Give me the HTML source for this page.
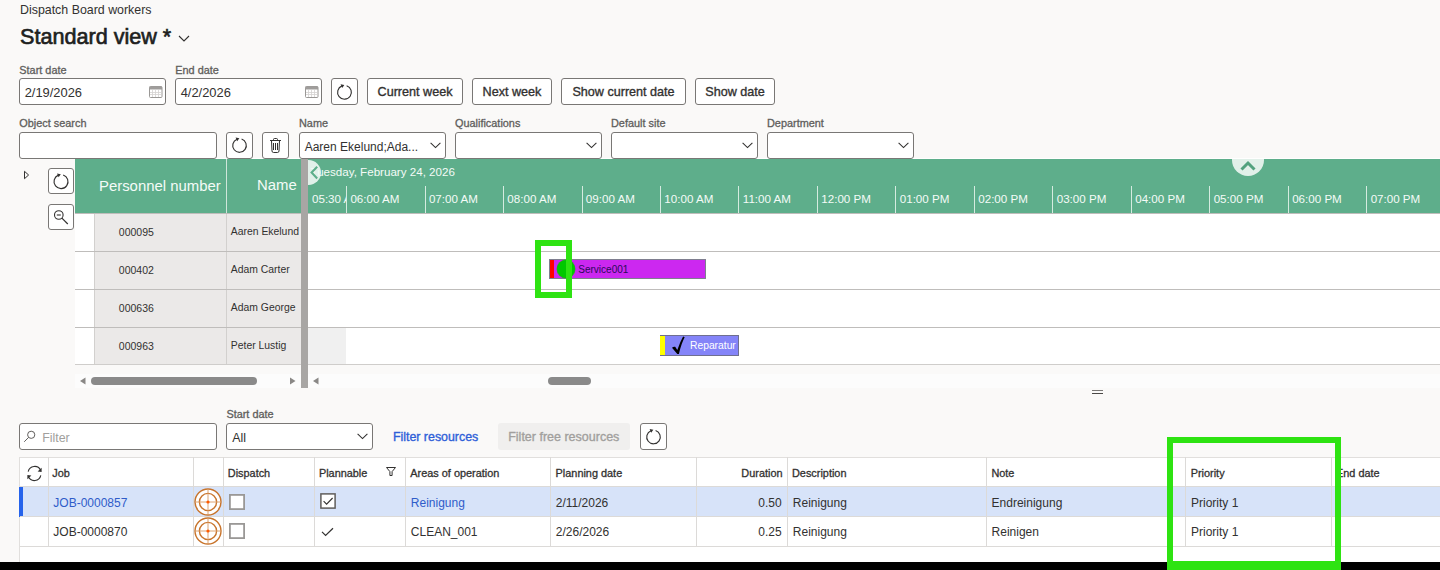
<!DOCTYPE html>
<html><head><meta charset="utf-8"><title>Dispatch Board workers</title>
<style>
html,body{margin:0;padding:0;}
body{width:1440px;height:570px;position:relative;overflow:hidden;background:#faf9f8;font-family:"Liberation Sans",sans-serif;}
.a{position:absolute;}
.t{position:absolute;white-space:nowrap;line-height:1;}
.box{background:#fff;border:1px solid #797775;border-radius:3px;box-sizing:border-box;}
svg{overflow:visible}
</style></head><body>
<div class="t" style="left:20.00px;top:3.50px;font-size:12.4px;font-weight:400;color:#323130;">Dispatch Board workers</div>
<div class="t" style="left:20.00px;top:25.72px;font-size:21.6px;font-weight:400;color:#201f1e;-webkit-text-stroke:0.65px #201f1e;">Standard view *</div>
<svg class="a" style="left:178px;top:34px;" width="12" height="9" viewBox="0 0 12 9"><path d="M1 2 L6 7 L11 2" fill="none" stroke="#323130" stroke-width="1.1"/></svg>
<div class="t" style="left:19.30px;top:64.77px;font-size:10.9px;font-weight:400;color:#605e5c;-webkit-text-stroke:0.3px #605e5c;">Start date</div>
<div class="t" style="left:175.30px;top:64.77px;font-size:10.9px;font-weight:400;color:#605e5c;-webkit-text-stroke:0.3px #605e5c;">End date</div>
<div class="a box" style="left:19px;top:78px;width:147px;height:27px;"></div>
<div class="t" style="left:24.70px;top:87.08px;font-size:12.9px;font-weight:400;color:#323130;">2/19/2026</div>
<svg class="a" style="left:149px;top:86px;" width="14" height="12" viewBox="0 0 14 12"><rect x="0.5" y="0.5" width="12.5" height="11" rx="1" fill="#fff" stroke="#9a9896" stroke-width="1"/><rect x="0.5" y="0.5" width="12.5" height="3" fill="#9f9d9b"/><path d="M3.5 4 V11 M6.5 4 V11 M9.5 4 V11 M1 6.5 H12.5 M1 8.5 H12.5" stroke="#d4d2d0" stroke-width="0.8"/></svg>
<div class="a box" style="left:175px;top:78px;width:147px;height:27px;"></div>
<div class="t" style="left:180.70px;top:87.08px;font-size:12.9px;font-weight:400;color:#323130;">4/2/2026</div>
<svg class="a" style="left:305px;top:86px;" width="14" height="12" viewBox="0 0 14 12"><rect x="0.5" y="0.5" width="12.5" height="11" rx="1" fill="#fff" stroke="#9a9896" stroke-width="1"/><rect x="0.5" y="0.5" width="12.5" height="3" fill="#9f9d9b"/><path d="M3.5 4 V11 M6.5 4 V11 M9.5 4 V11 M1 6.5 H12.5 M1 8.5 H12.5" stroke="#d4d2d0" stroke-width="0.8"/></svg>
<div class="a box" style="left:331px;top:78px;width:27px;height:27px;"></div>
<svg class="a" style="left:331px;top:78px;" width="27" height="27" viewBox="0 0 27 27"><path d="M15.63 7.74 A6.9 6.9 0 1 1 10.92 7.90" fill="none" stroke="#323130" stroke-width="1.15"/><path d="M13.33 6.93 L9.57 6.18 L11.15 10.07 Z" fill="#323130"/></svg>
<div class="a box" style="left:367px;top:78px;width:96px;height:27px;"></div>
<div class="t" style="left:367px;top:85.63px;width:96px;text-align:center;font-size:12.6px;font-weight:400;-webkit-text-stroke:0.35px #323130;color:#323130">Current week</div>
<div class="a box" style="left:472px;top:78px;width:80px;height:27px;"></div>
<div class="t" style="left:472px;top:85.63px;width:80px;text-align:center;font-size:12.6px;font-weight:400;-webkit-text-stroke:0.35px #323130;color:#323130">Next week</div>
<div class="a box" style="left:561px;top:78px;width:125px;height:27px;"></div>
<div class="t" style="left:561px;top:85.63px;width:125px;text-align:center;font-size:12.6px;font-weight:400;-webkit-text-stroke:0.35px #323130;color:#323130">Show current date</div>
<div class="a box" style="left:695px;top:78px;width:80px;height:27px;"></div>
<div class="t" style="left:695px;top:85.63px;width:80px;text-align:center;font-size:12.6px;font-weight:400;-webkit-text-stroke:0.35px #323130;color:#323130">Show date</div>
<div class="t" style="left:19.30px;top:118.07px;font-size:10.9px;font-weight:400;color:#605e5c;-webkit-text-stroke:0.3px #605e5c;">Object search</div>
<div class="t" style="left:299.00px;top:118.07px;font-size:10.9px;font-weight:400;color:#605e5c;-webkit-text-stroke:0.3px #605e5c;">Name</div>
<div class="t" style="left:455.00px;top:118.07px;font-size:10.9px;font-weight:400;color:#605e5c;-webkit-text-stroke:0.3px #605e5c;">Qualifications</div>
<div class="t" style="left:611.00px;top:118.07px;font-size:10.9px;font-weight:400;color:#605e5c;-webkit-text-stroke:0.3px #605e5c;">Default site</div>
<div class="t" style="left:767.00px;top:118.07px;font-size:10.9px;font-weight:400;color:#605e5c;-webkit-text-stroke:0.3px #605e5c;">Department</div>
<div class="a" style="left:75px;top:158px;width:1365px;height:1px;background:#ffffff"></div>
<div class="a box" style="left:19px;top:132px;width:198px;height:27px;"></div>
<div class="a box" style="left:226px;top:132px;width:27px;height:27px;"></div>
<svg class="a" style="left:226px;top:132px;" width="27" height="26" viewBox="0 0 27 26"><path d="M15.60 7.03 A6.8 6.8 0 1 1 10.95 7.20" fill="none" stroke="#323130" stroke-width="1.15"/><path d="M13.36 6.22 L9.61 5.47 L11.18 9.37 Z" fill="#323130"/></svg>
<div class="a box" style="left:262px;top:132px;width:27px;height:27px;"></div>
<svg class="a" style="left:262px;top:132px;" width="27" height="26" viewBox="0 0 27 26"><path d="M8 8.5 H19 M11.5 8.5 V7.5 Q11.5 6.5 12.5 6.5 H14.5 Q15.5 6.5 15.5 7.5 V8.5 M9.5 8.5 L10 19 Q10.1 20.5 11.5 20.5 H15.5 Q16.9 20.5 17 19 L17.5 8.5 M11.5 11 V18 M13.5 11 V18 M15.5 11 V18" fill="none" stroke="#323130" stroke-width="1"/></svg>
<div class="a box" style="left:299px;top:132px;width:147px;height:27px;"></div>
<svg class="a" style="left:430px;top:142px;" width="11" height="7" viewBox="0 0 11 7"><path d="M0.6 0.8 L5.5 5.6 L10.4 0.8" fill="none" stroke="#323130" stroke-width="1.1"/></svg>
<div class="t" style="left:304.70px;top:140.84px;font-size:12.0px;font-weight:400;color:#323130;">Aaren Ekelund;Ada...</div>
<div class="a box" style="left:455px;top:132px;width:147px;height:27px;"></div>
<svg class="a" style="left:586px;top:142px;" width="11" height="7" viewBox="0 0 11 7"><path d="M0.6 0.8 L5.5 5.6 L10.4 0.8" fill="none" stroke="#323130" stroke-width="1.1"/></svg>
<div class="a box" style="left:611px;top:132px;width:147px;height:27px;"></div>
<svg class="a" style="left:742px;top:142px;" width="11" height="7" viewBox="0 0 11 7"><path d="M0.6 0.8 L5.5 5.6 L10.4 0.8" fill="none" stroke="#323130" stroke-width="1.1"/></svg>
<div class="a box" style="left:767px;top:132px;width:147px;height:27px;"></div>
<svg class="a" style="left:898px;top:142px;" width="11" height="7" viewBox="0 0 11 7"><path d="M0.6 0.8 L5.5 5.6 L10.4 0.8" fill="none" stroke="#323130" stroke-width="1.1"/></svg>
<div class="a" style="left:75px;top:159px;width:1365px;height:54px;background:#5eae8b"></div>
<svg class="a" style="left:23px;top:170px;" width="7" height="10" viewBox="0 0 7 10"><path d="M1.5 1.3 L5.6 5 L1.5 8.7 Z" fill="none" stroke="#323130" stroke-width="1"/></svg>
<div class="a box" style="left:48px;top:168px;width:26px;height:26px;"></div>
<svg class="a" style="left:48px;top:168px;" width="26" height="26" viewBox="0 0 26 26"><path d="M15.16 6.94 A7 7 0 1 1 10.38 7.11" fill="none" stroke="#323130" stroke-width="1.15"/><path d="M12.79 6.14 L9.03 5.39 L10.61 9.28 Z" fill="#323130"/></svg>
<div class="a box" style="left:48px;top:204px;width:26px;height:26px;"></div>
<svg class="a" style="left:48px;top:204px;" width="26" height="26" viewBox="0 0 26 26"><circle cx="10.8" cy="11" r="4.3" fill="none" stroke="#323130" stroke-width="1.1"/><path d="M8.8 11 H12.8" stroke="#323130" stroke-width="1.1"/><path d="M13.9 14.1 L19.8 20" stroke="#323130" stroke-width="1.2"/></svg>
<div class="a" style="left:225.5px;top:159px;width:1px;height:54px;background:#cfe6da"></div>
<div class="t" style="left:99.00px;top:178.69px;font-size:14.9px;font-weight:400;color:#f4fbf7;">Personnel number</div>
<div class="t" style="right:1143.30px;top:178.19px;font-size:14.9px;font-weight:400;color:#f4fbf7;text-align:right;">Name</div>
<div class="a" style="left:75px;top:213px;width:1365px;height:152px;background:#ffffff"></div>
<div class="a" style="left:94.5px;top:213px;width:206px;height:152px;background:#ebe9e8"></div>
<div class="a" style="left:94px;top:213px;width:1px;height:152px;background:#d2d0ce"></div>
<div class="a" style="left:225.5px;top:213px;width:1px;height:152px;background:#d2d0ce"></div>
<div class="a" style="left:307.5px;top:327px;width:38.7px;height:38px;background:#f0f0f0"></div>
<div class="a" style="left:75px;top:212.5px;width:1365px;height:1.5px;background:#bfbdbb"></div>
<div class="a" style="left:75px;top:250.5px;width:1365px;height:1.5px;background:#bfbdbb"></div>
<div class="a" style="left:75px;top:288.5px;width:1365px;height:1.5px;background:#bfbdbb"></div>
<div class="a" style="left:75px;top:326.5px;width:1365px;height:1.5px;background:#bfbdbb"></div>
<div class="a" style="left:75px;top:364px;width:1365px;height:1.2px;background:#cfcdcb"></div>
<div class="t" style="left:118.80px;top:226.61px;font-size:10.5px;font-weight:400;color:#323130;">000095</div>
<div class="t" style="left:230.80px;top:226.70px;font-size:10.4px;font-weight:400;color:#323130;">Aaren Ekelund</div>
<div class="t" style="left:118.80px;top:264.61px;font-size:10.5px;font-weight:400;color:#323130;">000402</div>
<div class="t" style="left:230.80px;top:264.70px;font-size:10.4px;font-weight:400;color:#323130;">Adam Carter</div>
<div class="t" style="left:118.80px;top:302.61px;font-size:10.5px;font-weight:400;color:#323130;">000636</div>
<div class="t" style="left:230.80px;top:302.70px;font-size:10.4px;font-weight:400;color:#323130;">Adam George</div>
<div class="t" style="left:118.80px;top:340.61px;font-size:10.5px;font-weight:400;color:#323130;">000963</div>
<div class="t" style="left:230.80px;top:340.70px;font-size:10.4px;font-weight:400;color:#323130;">Peter Lustig</div>
<div class="a" style="left:346px;top:186px;width:1px;height:27px;background:#d5ebe0"></div>
<div class="t" style="left:350.40px;top:193.18px;font-size:11.6px;font-weight:400;color:#f4fbf7;">06:00 AM</div>
<div class="a" style="left:425px;top:186px;width:1px;height:27px;background:#d5ebe0"></div>
<div class="t" style="left:428.88px;top:193.18px;font-size:11.6px;font-weight:400;color:#f4fbf7;">07:00 AM</div>
<div class="a" style="left:503px;top:186px;width:1px;height:27px;background:#d5ebe0"></div>
<div class="t" style="left:507.36px;top:193.18px;font-size:11.6px;font-weight:400;color:#f4fbf7;">08:00 AM</div>
<div class="a" style="left:582px;top:186px;width:1px;height:27px;background:#d5ebe0"></div>
<div class="t" style="left:585.84px;top:193.18px;font-size:11.6px;font-weight:400;color:#f4fbf7;">09:00 AM</div>
<div class="a" style="left:660px;top:186px;width:1px;height:27px;background:#d5ebe0"></div>
<div class="t" style="left:664.32px;top:193.18px;font-size:11.6px;font-weight:400;color:#f4fbf7;">10:00 AM</div>
<div class="a" style="left:738px;top:186px;width:1px;height:27px;background:#d5ebe0"></div>
<div class="t" style="left:742.80px;top:193.18px;font-size:11.6px;font-weight:400;color:#f4fbf7;">11:00 AM</div>
<div class="a" style="left:817px;top:186px;width:1px;height:27px;background:#d5ebe0"></div>
<div class="t" style="left:821.28px;top:193.18px;font-size:11.6px;font-weight:400;color:#f4fbf7;">12:00 PM</div>
<div class="a" style="left:895px;top:186px;width:1px;height:27px;background:#d5ebe0"></div>
<div class="t" style="left:899.76px;top:193.18px;font-size:11.6px;font-weight:400;color:#f4fbf7;">01:00 PM</div>
<div class="a" style="left:974px;top:186px;width:1px;height:27px;background:#d5ebe0"></div>
<div class="t" style="left:978.24px;top:193.18px;font-size:11.6px;font-weight:400;color:#f4fbf7;">02:00 PM</div>
<div class="a" style="left:1052px;top:186px;width:1px;height:27px;background:#d5ebe0"></div>
<div class="t" style="left:1056.72px;top:193.18px;font-size:11.6px;font-weight:400;color:#f4fbf7;">03:00 PM</div>
<div class="a" style="left:1131px;top:186px;width:1px;height:27px;background:#d5ebe0"></div>
<div class="t" style="left:1135.20px;top:193.18px;font-size:11.6px;font-weight:400;color:#f4fbf7;">04:00 PM</div>
<div class="a" style="left:1209px;top:186px;width:1px;height:27px;background:#d5ebe0"></div>
<div class="t" style="left:1213.68px;top:193.18px;font-size:11.6px;font-weight:400;color:#f4fbf7;">05:00 PM</div>
<div class="a" style="left:1288px;top:186px;width:1px;height:27px;background:#d5ebe0"></div>
<div class="t" style="left:1292.16px;top:193.18px;font-size:11.6px;font-weight:400;color:#f4fbf7;">06:00 PM</div>
<div class="a" style="left:1366px;top:186px;width:1px;height:27px;background:#d5ebe0"></div>
<div class="t" style="left:1370.64px;top:193.18px;font-size:11.6px;font-weight:400;color:#f4fbf7;">07:00 PM</div>
<div class="a" style="left:307.5px;top:186px;width:38.5px;height:27px;overflow:hidden">
<div class="t" style="left:4.50px;top:7.18px;font-size:11.6px;font-weight:400;color:#f4fbf7;">05:30 AM</div>
</div>
<div class="a" style="left:307.5px;top:159px;width:20px;height:54px;overflow:hidden">
<div class="a" style="left:-12px;top:0.8px;width:25px;height:25px;border-radius:50%;background:#e1f0e9"></div>
</div>
<div class="t" style="left:310.50px;top:166.48px;font-size:11.6px;font-weight:400;color:#f4fbf7;">Tuesday, February 24, 2026</div>
<svg class="a" style="left:309px;top:165px;" width="10" height="15" viewBox="0 0 10 15"><path d="M8.2 1.8 L2.6 7.6 L8.2 13.4" fill="none" stroke="#5eae8b" stroke-width="2.1"/></svg>
<div class="a" style="left:1230px;top:159px;width:36px;height:20px;overflow:hidden">
<div class="a" style="left:2px;top:-15px;width:32px;height:32px;border-radius:50%;background:#e1f0e9"></div>
</div>
<svg class="a" style="left:1240px;top:160px;" width="16" height="11" viewBox="0 0 16 11"><path d="M1.5 9.5 L8 3 L14.5 9.5" fill="none" stroke="#52a27e" stroke-width="3"/></svg>
<div class="a" style="left:300.5px;top:159px;width:7px;height:229px;background:#a8a6a4"></div>
<div class="a" style="left:549px;top:259.2px;width:157px;height:20.3px;background:#cc28f0;box-shadow:inset 0 0 0 1px #7f7f8f"></div>
<div class="a" style="left:549.5px;top:259.7px;width:4.3px;height:18.8px;background:#ff0000"></div>
<div class="a" style="left:557px;top:260px;width:18px;height:18px;border-radius:50%;background:#00c800;box-shadow:0 0 0 0.5px #4a8a4a"></div>
<div class="t" style="left:578.30px;top:264.64px;font-size:10.0px;font-weight:400;color:#2a0a5a;">Service001</div>
<div class="a" style="left:659.8px;top:335px;width:78.8px;height:20.5px;background:#8484f8;box-shadow:inset 0 0 0 1px #6f6f8f"></div>
<div class="a" style="left:660.3px;top:335.5px;width:5px;height:19.3px;background:#ffff00"></div>
<svg class="a" style="left:670px;top:335px;" width="16" height="20" viewBox="0 0 16 20"><path d="M2 12.8 Q3.6 11.2 5.2 11.8 L7.3 14.9 Q10.1 6.8 13.1 1.5 L14.7 2.3 Q11.5 8 8.9 18.9 L7.3 18.9 Z" fill="#000"/></svg>
<div class="t" style="left:690.00px;top:341.28px;font-size:10.3px;font-weight:400;color:#ffffff;">Reparatur</div>
<div class="a" style="left:75px;top:374px;width:1365px;height:14px;background:#fcfcfc"></div>
<svg class="a" style="left:79px;top:377px;" width="8" height="8" viewBox="0 0 8 8"><path d="M6.5 0.5 L1 4 L6.5 7.5 Z" fill="#8a8886"/></svg>
<div class="a" style="left:90.8px;top:377px;width:166px;height:8.2px;background:#8a8a8a;border-radius:4.1px"></div>
<svg class="a" style="left:289px;top:377px;" width="8" height="8" viewBox="0 0 8 8"><path d="M1 0.5 L6.5 4 L1 7.5 Z" fill="#8a8886"/></svg>
<svg class="a" style="left:312px;top:377px;" width="8" height="8" viewBox="0 0 8 8"><path d="M6.5 0.5 L1 4 L6.5 7.5 Z" fill="#8a8886"/></svg>
<div class="a" style="left:547.6px;top:377px;width:43.4px;height:8px;background:#8a8a8a;border-radius:4px"></div>
<div class="a" style="left:300.5px;top:374px;width:7px;height:14px;background:#a8a6a4"></div>
<div class="a" style="left:1092px;top:390.3px;width:11px;height:1.2px;background:#7a7876"></div>
<div class="a" style="left:1092px;top:393px;width:11px;height:1.2px;background:#4a4846"></div>
<div class="t" style="left:226.40px;top:409.27px;font-size:10.9px;font-weight:400;color:#605e5c;-webkit-text-stroke:0.3px #605e5c;">Start date</div>
<div class="a box" style="left:19px;top:423px;width:198px;height:27px;"></div>
<svg class="a" style="left:22px;top:428px;" width="16" height="16" viewBox="0 0 16 16"><circle cx="9.2" cy="6.8" r="3.6" fill="none" stroke="#605e5c" stroke-width="1"/><path d="M6.6 9.4 L2.2 13.8" stroke="#605e5c" stroke-width="1"/></svg>
<div class="t" style="left:42.20px;top:431.80px;font-size:12.4px;font-weight:400;color:#a19f9d;">Filter</div>
<div class="a box" style="left:226px;top:423px;width:147px;height:27px;"></div>
<svg class="a" style="left:357px;top:433px;" width="11" height="7" viewBox="0 0 11 7"><path d="M0.6 0.8 L5.5 5.6 L10.4 0.8" fill="none" stroke="#323130" stroke-width="1.1"/></svg>
<div class="t" style="left:232.20px;top:431.80px;font-size:12.4px;font-weight:400;color:#323130;">All</div>
<div class="t" style="left:392.90px;top:430.60px;font-size:12.4px;font-weight:400;color:#2f5fd8;-webkit-text-stroke:0.35px #2f5fd8;">Filter resources</div>
<div class="a" style="left:498px;top:423px;width:132px;height:27px;background:#f0efee;border-radius:3px"></div>
<div class="t" style="left:508.20px;top:430.52px;font-size:12.5px;font-weight:400;color:#a19f9d;-webkit-text-stroke:0.35px #a19f9d;">Filter free resources</div>
<div class="a box" style="left:640px;top:423px;width:27px;height:27px;"></div>
<svg class="a" style="left:640px;top:423px;" width="27" height="27" viewBox="0 0 27 27"><path d="M15.60 7.53 A6.8 6.8 0 1 1 10.95 7.70" fill="none" stroke="#323130" stroke-width="1.15"/><path d="M13.36 6.72 L9.61 5.97 L11.18 9.87 Z" fill="#323130"/></svg>
<div class="a" style="left:19px;top:457px;width:1421px;height:105px;background:#ffffff;border-top:1px solid #e1dfdd;border-left:1px solid #e1dfdd;box-sizing:border-box"></div>
<div class="a" style="left:20px;top:486.5px;width:1420px;height:30px;background:#d7e3f9"></div>
<div class="a" style="left:19px;top:487px;width:4px;height:29.7px;background:#2563eb"></div>
<div class="a" style="left:20px;top:486px;width:1420px;height:1px;background:#dcdad8"></div>
<div class="a" style="left:20px;top:516px;width:1420px;height:1px;background:#dcdad8"></div>
<div class="a" style="left:20px;top:545.5px;width:1420px;height:1px;background:#dcdad8"></div>
<div class="a" style="left:48px;top:457px;width:1px;height:89px;background:#dcdad8"></div>
<div class="a" style="left:193px;top:457px;width:1px;height:89px;background:#dcdad8"></div>
<div class="a" style="left:223px;top:457px;width:1px;height:89px;background:#dcdad8"></div>
<div class="a" style="left:314px;top:457px;width:1px;height:89px;background:#dcdad8"></div>
<div class="a" style="left:405px;top:457px;width:1px;height:89px;background:#dcdad8"></div>
<div class="a" style="left:550px;top:457px;width:1px;height:89px;background:#dcdad8"></div>
<div class="a" style="left:696px;top:457px;width:1px;height:89px;background:#dcdad8"></div>
<div class="a" style="left:787px;top:457px;width:1px;height:89px;background:#dcdad8"></div>
<div class="a" style="left:986px;top:457px;width:1px;height:89px;background:#dcdad8"></div>
<div class="a" style="left:1185px;top:457px;width:1px;height:89px;background:#dcdad8"></div>
<div class="a" style="left:1331px;top:457px;width:1px;height:89px;background:#dcdad8"></div>
<svg class="a" style="left:26px;top:465px;" width="17" height="17" viewBox="0 0 17 17"><path d="M2.2 6.6 A6.6 6.6 0 0 1 14.6 5.2" fill="none" stroke="#323130" stroke-width="1.1"/><path d="M15.6 2.8 L15.6 6.9 L11.6 6.6 Z" fill="#323130"/><path d="M14.8 10.4 A6.6 6.6 0 0 1 2.4 11.8" fill="none" stroke="#323130" stroke-width="1.1"/><path d="M1.4 14.2 L1.4 10.1 L5.4 10.4 Z" fill="#323130"/></svg>
<div class="t" style="left:52.20px;top:467.97px;font-size:10.9px;font-weight:400;color:#323130;-webkit-text-stroke:0.3px #323130;">Job</div>
<div class="t" style="left:227.80px;top:467.97px;font-size:10.9px;font-weight:400;color:#323130;-webkit-text-stroke:0.3px #323130;">Dispatch</div>
<div class="t" style="left:318.90px;top:467.97px;font-size:10.9px;font-weight:400;color:#323130;-webkit-text-stroke:0.3px #323130;">Plannable</div>
<svg class="a" style="left:386px;top:467px;" width="10" height="10" viewBox="0 0 10 10"><path d="M0.5 0.5 H9.5 L6.1 4.6 V8.5 H3.9 V4.6 Z" fill="none" stroke="#323130" stroke-width="1" stroke-linejoin="round"/></svg>
<div class="t" style="left:410.30px;top:467.97px;font-size:10.9px;font-weight:400;color:#323130;-webkit-text-stroke:0.3px #323130;">Areas of operation</div>
<div class="t" style="left:555.60px;top:467.97px;font-size:10.9px;font-weight:400;color:#323130;-webkit-text-stroke:0.3px #323130;">Planning date</div>
<div class="t" style="right:657.50px;top:467.97px;font-size:10.9px;font-weight:400;color:#323130;text-align:right;-webkit-text-stroke:0.3px #323130;">Duration</div>
<div class="t" style="left:792.00px;top:467.97px;font-size:10.9px;font-weight:400;color:#323130;-webkit-text-stroke:0.3px #323130;">Description</div>
<div class="t" style="left:991.40px;top:467.97px;font-size:10.9px;font-weight:400;color:#323130;-webkit-text-stroke:0.3px #323130;">Note</div>
<div class="t" style="left:1190.70px;top:467.97px;font-size:10.9px;font-weight:400;color:#323130;-webkit-text-stroke:0.3px #323130;">Priority</div>
<div class="t" style="left:1336.00px;top:467.97px;font-size:10.9px;font-weight:400;color:#323130;-webkit-text-stroke:0.3px #323130;">End date</div>
<div class="t" style="left:53.30px;top:496.54px;font-size:12.0px;font-weight:400;color:#2f5cc9;">JOB-0000857</div>
<svg class="a" style="left:194px;top:487.5px;" width="28" height="28" viewBox="0 0 28 28"><circle cx="14" cy="14" r="13" fill="#fff" stroke="#c8742c" stroke-width="1.4"/><circle cx="14" cy="14" r="8.6" fill="none" stroke="#c8742c" stroke-width="1.4"/><path d="M1 14 H27 M14 1 V27" stroke="#d99a62" stroke-width="0.9"/><circle cx="14" cy="14" r="1.6" fill="#ff5a00"/></svg>
<svg class="a" style="left:228.5px;top:493.5px;" width="16" height="16" viewBox="0 0 16 16"><rect x="0.9" y="0.9" width="14.2" height="14.2" fill="#fff" stroke="#9a9896" stroke-width="1.8"/></svg>
<svg class="a" style="left:319.5px;top:493.3px;" width="16" height="16" viewBox="0 0 16 16"><rect x="0.9" y="0.9" width="14.2" height="14.2" fill="#fff" stroke="#605e5c" stroke-width="1.5"/><path d="M3.6 8.2 L6.6 11.2 L12.6 5" fill="none" stroke="#323130" stroke-width="1.1"/></svg>
<div class="t" style="left:410.80px;top:496.54px;font-size:12.0px;font-weight:400;color:#2f5cc9;">Reinigung</div>
<div class="t" style="left:555.80px;top:496.54px;font-size:12.0px;font-weight:400;color:#323130;">2/11/2026</div>
<div class="t" style="right:658.30px;top:496.54px;font-size:12.0px;font-weight:400;color:#323130;text-align:right;">0.50</div>
<div class="t" style="left:792.80px;top:496.54px;font-size:12.0px;font-weight:400;color:#323130;">Reinigung</div>
<div class="t" style="left:991.60px;top:496.54px;font-size:12.0px;font-weight:400;color:#323130;">Endreinigung</div>
<div class="t" style="left:1191.00px;top:496.54px;font-size:12.0px;font-weight:400;color:#323130;">Priority 1</div>
<div class="t" style="left:53.30px;top:526.04px;font-size:12.0px;font-weight:400;color:#323130;">JOB-0000870</div>
<svg class="a" style="left:194px;top:517.1px;" width="28" height="28" viewBox="0 0 28 28"><circle cx="14" cy="14" r="13" fill="#fff" stroke="#c8742c" stroke-width="1.4"/><circle cx="14" cy="14" r="8.6" fill="none" stroke="#c8742c" stroke-width="1.4"/><path d="M1 14 H27 M14 1 V27" stroke="#d99a62" stroke-width="0.9"/><circle cx="14" cy="14" r="1.6" fill="#ff5a00"/></svg>
<svg class="a" style="left:228.5px;top:523.1px;" width="16" height="16" viewBox="0 0 16 16"><rect x="0.9" y="0.9" width="14.2" height="14.2" fill="#fff" stroke="#9a9896" stroke-width="1.8"/></svg>
<svg class="a" style="left:321px;top:527px;" width="13" height="10" viewBox="0 0 13 10"><path d="M1 4.8 L4.6 8.4 L12 1.2" fill="none" stroke="#323130" stroke-width="1.2"/></svg>
<div class="t" style="left:410.80px;top:526.04px;font-size:12.0px;font-weight:400;color:#323130;">CLEAN_001</div>
<div class="t" style="left:555.80px;top:526.04px;font-size:12.0px;font-weight:400;color:#323130;">2/26/2026</div>
<div class="t" style="right:658.30px;top:526.04px;font-size:12.0px;font-weight:400;color:#323130;text-align:right;">0.25</div>
<div class="t" style="left:792.80px;top:526.04px;font-size:12.0px;font-weight:400;color:#323130;">Reinigung</div>
<div class="t" style="left:991.60px;top:526.04px;font-size:12.0px;font-weight:400;color:#323130;">Reinigen</div>
<div class="t" style="left:1191.00px;top:526.04px;font-size:12.0px;font-weight:400;color:#323130;">Priority 1</div>
<div class="a" style="left:0px;top:562px;width:1440px;height:8px;background:#000"></div>
<div class="a" style="left:534.5px;top:239.8px;width:37.4px;height:57.8px;box-sizing:border-box;border:6px solid #2ee312"></div>
<div class="a" style="left:1166.5px;top:437.4px;width:174.2px;height:132.6px;box-sizing:border-box;border:6.6px solid #2ee312;border-bottom-width:9.7px"></div>
</body></html>
